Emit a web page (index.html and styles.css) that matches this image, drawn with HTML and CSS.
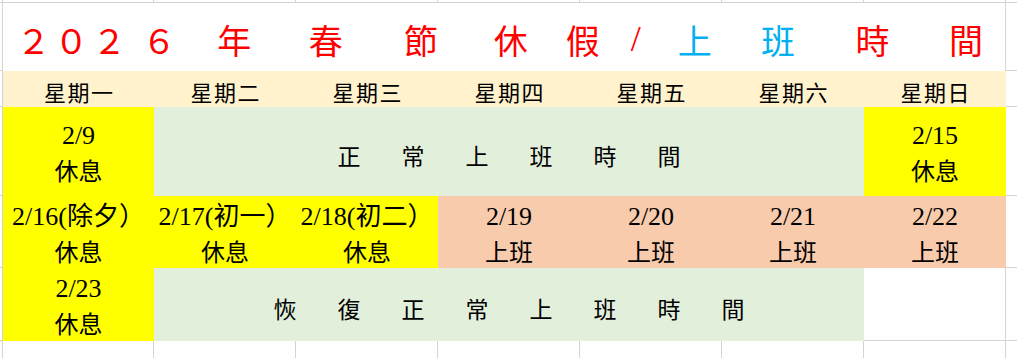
FILE: index.html
```html
<!DOCTYPE html>
<html lang="zh-Hant">
<head>
<meta charset="utf-8">
<title>2026 年春節休假／上班時間</title>
<link rel="stylesheet" href="styles.css">
</head>
<body>
<div class="sheet">
  <!-- row 0 -->
  <div class="g edge"></div><div class="g"></div><div class="g"></div><div class="g"></div><div class="g"></div><div class="g"></div><div class="g"></div><div class="g"></div><div class="g last"></div>
  <!-- row 1: title -->
  <div class="g edge"></div>
  <div class="title">
    <span class="red">２</span><span class="red">０</span><span class="red">２</span><span class="red">６</span><span class="red">年</span><span class="red">春</span><span class="red">節</span><span class="red">休</span><span class="red">假</span><span class="red slash">/</span><span class="blue">上</span><span class="blue">班</span><span class="red">時</span><span class="red">間</span>
  </div>
  <div class="g last"></div>
  <!-- row 2: header -->
  <div class="g edge"></div>
  <div class="hd">星期一</div><div class="hd">星期二</div><div class="hd">星期三</div><div class="hd">星期四</div><div class="hd">星期五</div><div class="hd">星期六</div><div class="hd">星期日</div>
  <div class="g last"></div>
  <!-- row 3 -->
  <div class="g edge"></div>
  <div class="c yellow"><span class="d">2/9</span><span>休息</span></div>
  <div class="green span5 spread"><span>正</span><span>常</span><span>上</span><span>班</span><span>時</span><span>間</span></div>
  <div class="c yellow"><span class="d">2/15</span><span>休息</span></div>
  <div class="g last"></div>
  <!-- row 4 -->
  <div class="g edge"></div>
  <div class="c yellow"><span class="d">2/16(除夕）</span><span>休息</span></div>
  <div class="c yellow"><span class="d">2/17(初一）</span><span>休息</span></div>
  <div class="c yellow"><span class="d">2/18(初二）</span><span>休息</span></div>
  <div class="c peach"><span class="d">2/19</span><span>上班</span></div>
  <div class="c peach"><span class="d">2/20</span><span>上班</span></div>
  <div class="c peach"><span class="d">2/21</span><span>上班</span></div>
  <div class="c peach"><span class="d">2/22</span><span>上班</span></div>
  <div class="g last"></div>
  <!-- row 5 -->
  <div class="g edge"></div>
  <div class="c yellow"><span class="d">2/23</span><span>休息</span></div>
  <div class="green span5 spread"><span>恢</span><span>復</span><span>正</span><span>常</span><span>上</span><span>班</span><span>時</span><span>間</span></div>
  <div class="g"></div>
  <div class="g last"></div>
  <!-- row 6 -->
  <div class="g edge open"></div><div class="g open"></div><div class="g open"></div><div class="g open"></div><div class="g open"></div><div class="g open"></div><div class="g open"></div><div class="g open"></div><div class="g last open"></div>
</div>
</body>
</html>
```

FILE: styles.css
```css
html, body {
  margin: 0;
  padding: 0;
  background: #ffffff;
}

.sheet {
  width: 1017px;
  height: 358px;
  overflow: hidden;
  display: grid;
  grid-template-columns: 3px 151px repeat(6, 142px) 11px;
  grid-template-rows: 3px 68px 36px 89px 72px 73px 17px;
  font-family: "Liberation Serif", "Noto Sans CJK TC", serif;
  color: #000000;
}

.g {
  box-sizing: border-box;
  background: #ffffff;
  border-right: 1px solid #d4d4d4;
  border-bottom: 1px solid #d4d4d4;
}

.g.last {
  border-right: none;
}

.g.open {
  border-bottom: none;
}

.title {
  grid-column: span 7;
  box-sizing: border-box;
  border-right: 1px solid #d4d4d4;
  background: #ffffff;
  display: grid;
  grid-template-columns: 37.75px 37.75px 38.25px 61.5px 88.75px 94.5px 95.5px 84.5px 59.5px 46.5px 71.5px 95px 94px 93px;
  justify-items: center;
  align-items: center;
  padding: 5px 0 0 11.5px;
  font-family: "Noto Sans CJK TC", sans-serif;
  font-size: 34px;
  line-height: 1;
}

.red {
  color: #ff0000;
}

.blue {
  color: #00b0f0;
}

.slash {
  font-family: "Liberation Serif", serif;
  font-size: 36px;
  line-height: 1;
  margin-top: -2px;
}

.hd {
  background: #fff2cc;
  display: flex;
  align-items: center;
  justify-content: center;
  padding-top: 3px;
  box-sizing: border-box;
  font-family: "Noto Sans CJK TC", sans-serif;
  font-size: 22px;
  letter-spacing: 1.5px;
  text-indent: 1.5px;
}

.c {
  display: flex;
  flex-direction: column;
  align-items: center;
  justify-content: center;
  box-sizing: border-box;
  padding-top: 5px;
  font-size: 24px;
  line-height: 36px;
  white-space: nowrap;
}

.d {
  font-size: 26px;
}

.yellow {
  background: #ffff00;
}

.green {
  background: #e2efda;
}

.peach {
  background: #f8cbad;
}

.span5 {
  grid-column: span 5;
}

.spread {
  display: flex;
  justify-content: center;
  align-items: center;
  gap: 41px;
  padding-top: 6px;
  box-sizing: border-box;
  font-family: "Noto Sans CJK TC", sans-serif;
  font-size: 23px;
}
```
